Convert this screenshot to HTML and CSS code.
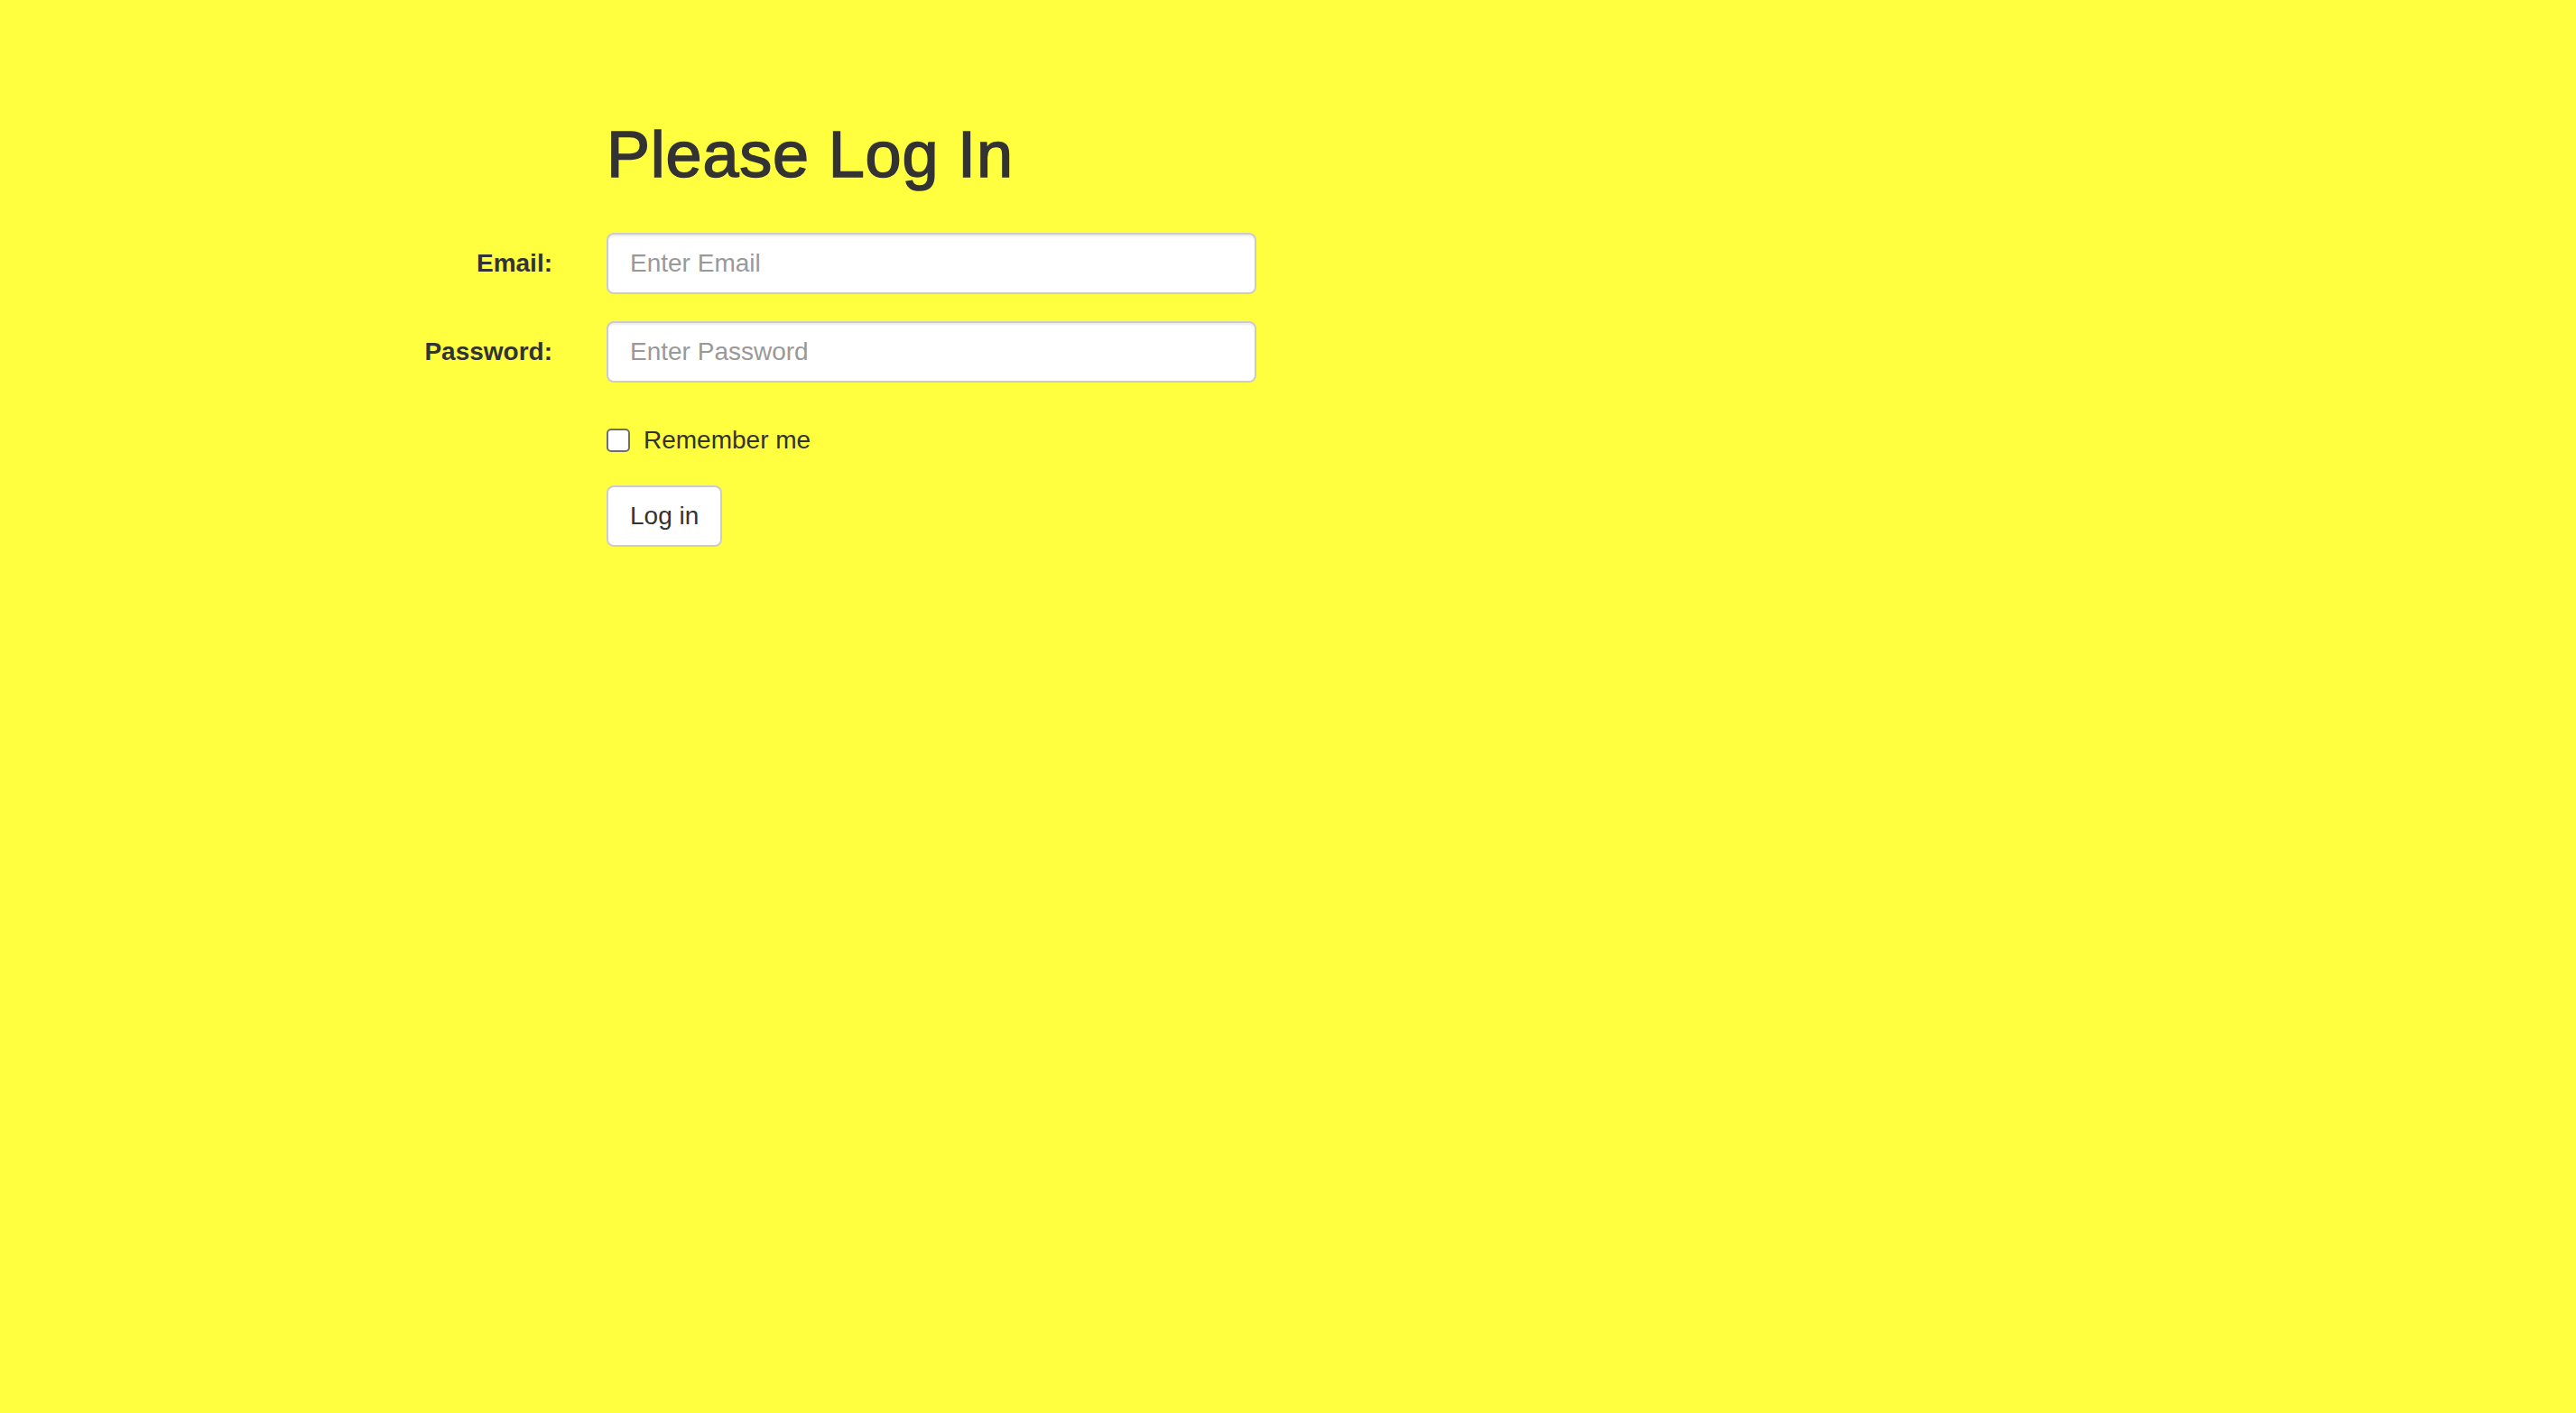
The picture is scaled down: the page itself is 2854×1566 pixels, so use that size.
FILE: index.html
```html
<!DOCTYPE html>
<html lang="en">
<head>
<meta charset="utf-8">
<title>Please Log In</title>
<link rel="stylesheet" href="styles.css">
</head>
<body>
<main class="page">
  <form class="login-form">
    <div class="spacer"></div>
    <h1 class="title">Please Log In</h1>

    <label class="field-label" for="email">Email:</label>
    <div class="control">
      <input class="text-input" type="email" id="email" placeholder="Enter Email">
    </div>

    <label class="field-label" for="password">Password:</label>
    <div class="control">
      <input class="text-input" type="password" id="password" placeholder="Enter Password">
    </div>

    <div class="spacer"></div>
    <div class="control check-row">
      <label class="check-label"><input class="checkbox" type="checkbox"><span>Remember me</span></label>
    </div>

    <div class="spacer"></div>
    <div class="control">
      <button class="btn" type="submit">Log in</button>
    </div>
  </form>
</main>
</body>
</html>
```

FILE: styles.css
```css
html, body {
  margin: 0;
  padding: 0;
}

body {
  background: #ffff40;
  min-height: 100vh;
  font-family: "Liberation Sans", Arial, Helvetica, sans-serif;
  font-size: 28px;
  line-height: 40px;
  color: #333333;
}

.page {
  padding-top: 131px;
}

.login-form {
  display: grid;
  grid-template-columns: 612px 720px;
  column-gap: 60px;
  align-items: start;
}

.title {
  margin: 0 0 47px 0;
  font-size: 72px;
  line-height: 80px;
  font-weight: 500;
  color: #333333;
  letter-spacing: 0.8px;
  -webkit-text-stroke: 1.6px #333333;
}

.field-label {
  text-align: right;
  font-weight: bold;
  padding-top: 14px;
  margin-bottom: 30px;
}

.control {
  margin-bottom: 30px;
}

.text-input {
  display: block;
  box-sizing: border-box;
  width: 100%;
  height: 68px;
  padding: 12px 24px;
  font-family: inherit;
  font-size: 28px;
  line-height: 40px;
  color: #555555;
  background: #ffffff;
  border: 2px solid #cccccc;
  border-radius: 8px;
  box-shadow: inset 0 2px 2px rgba(0, 0, 0, 0.075);
  outline: none;
}

.text-input::placeholder {
  color: #999999;
}

.check-row {
  padding-top: 14px;
}

.check-label {
  display: flex;
  align-items: flex-start;
  gap: 15px;
  font-weight: normal;
  cursor: pointer;
}

.checkbox {
  appearance: none;
  -webkit-appearance: none;
  box-sizing: border-box;
  width: 26px;
  height: 26px;
  margin: 7px 0 0 0;
  background: #ffffff;
  border: 2px solid #6e6e6e;
  border-radius: 5px;
}

.btn {
  box-sizing: border-box;
  height: 68px;
  padding: 12px 24px;
  font-family: inherit;
  font-size: 28px;
  line-height: 40px;
  color: #333333;
  background: #ffffff;
  border: 2px solid #cccccc;
  border-radius: 8px;
  cursor: pointer;
}
```
